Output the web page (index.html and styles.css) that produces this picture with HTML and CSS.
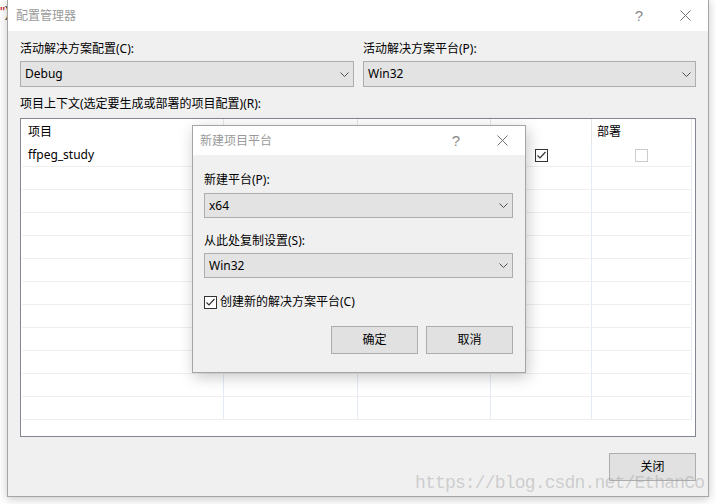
FILE: index.html
```html
<!DOCTYPE html>
<html>
<head>
<meta charset="utf-8">
<link rel="stylesheet" href="styles.css">
</head>
<body>
<div class="desktop">
  <div class="behind"><span class="q">"</span><span class="p">)</span></div>

  <div class="win main">
    <div class="titlebar">
      <span class="title">配置管理器</span>
      <span class="tbtn help">?</span>
      <span class="tbtn"><svg width="11" height="11" viewBox="0 0 11 11"><path d="M0.5 0.5L10.5 10.5M10.5 0.5L0.5 10.5" stroke="#6f6f6f" stroke-width="1" fill="none"/></svg></span>
    </div>
    <div class="body">
      <div class="toprow">
        <div class="field">
          <div class="label">活动解决方案配置(C):</div>
          <div class="combo combo-main"><span>Debug</span><svg width="9" height="5" viewBox="0 0 9 5"><path d="M0.5 0.5L4.5 4.5L8.5 0.5" fill="none" stroke="#505050"/></svg></div>
        </div>
        <div class="field">
          <div class="label">活动解决方案平台(P):</div>
          <div class="combo combo-main"><span>Win32</span><svg width="9" height="5" viewBox="0 0 9 5"><path d="M0.5 0.5L4.5 4.5L8.5 0.5" fill="none" stroke="#505050"/></svg></div>
        </div>
      </div>
      <div class="label ctx">项目上下文(选定要生成或部署的项目配置)(R):</div>
      <div class="grid">
        <div class="grow ghead">
          <div class="cell">项目</div>
          <div class="cell"></div>
          <div class="cell"></div>
          <div class="cell"></div>
          <div class="cell">部署</div>
        </div>
        <div class="grow">
          <div class="cell">ffpeg_study</div>
          <div class="cell"></div>
          <div class="cell"></div>
          <div class="cell center"><span class="cb cb-on"><svg width="11" height="11" viewBox="0 0 11 11"><path d="M1.5 5.5L4 8L9.5 2" fill="none" stroke="#333" stroke-width="1.2"/></svg></span></div>
          <div class="cell center"><span class="cb cb-off"></span></div>
        </div>
        <div class="grow"><div class="cell"></div><div class="cell"></div><div class="cell"></div><div class="cell"></div><div class="cell"></div></div>
        <div class="grow"><div class="cell"></div><div class="cell"></div><div class="cell"></div><div class="cell"></div><div class="cell"></div></div>
        <div class="grow"><div class="cell"></div><div class="cell"></div><div class="cell"></div><div class="cell"></div><div class="cell"></div></div>
        <div class="grow"><div class="cell"></div><div class="cell"></div><div class="cell"></div><div class="cell"></div><div class="cell"></div></div>
        <div class="grow"><div class="cell"></div><div class="cell"></div><div class="cell"></div><div class="cell"></div><div class="cell"></div></div>
        <div class="grow"><div class="cell"></div><div class="cell"></div><div class="cell"></div><div class="cell"></div><div class="cell"></div></div>
        <div class="grow"><div class="cell"></div><div class="cell"></div><div class="cell"></div><div class="cell"></div><div class="cell"></div></div>
        <div class="grow"><div class="cell"></div><div class="cell"></div><div class="cell"></div><div class="cell"></div><div class="cell"></div></div>
        <div class="grow"><div class="cell"></div><div class="cell"></div><div class="cell"></div><div class="cell"></div><div class="cell"></div></div>
        <div class="grow"><div class="cell"></div><div class="cell"></div><div class="cell"></div><div class="cell"></div><div class="cell"></div></div>
        <div class="grow"><div class="cell"></div><div class="cell"></div><div class="cell"></div><div class="cell"></div><div class="cell"></div></div>
      </div>
      <div class="footer"><div class="btn">关闭</div></div>
    </div>
  </div>

  <div class="win dialog">
    <div class="titlebar dtitlebar">
      <span class="title">新建项目平台</span>
      <span class="tbtn help">?</span>
      <span class="tbtn"><svg width="11" height="11" viewBox="0 0 11 11"><path d="M0.5 0.5L10.5 10.5M10.5 0.5L0.5 10.5" stroke="#6f6f6f" stroke-width="1" fill="none"/></svg></span>
    </div>
    <div class="dbody">
      <div class="label l1">新建平台(P):</div>
      <div class="combo combo-d"><span>x64</span><svg width="9" height="5" viewBox="0 0 9 5"><path d="M0.5 0.5L4.5 4.5L8.5 0.5" fill="none" stroke="#505050"/></svg></div>
      <div class="label l2">从此处复制设置(S):</div>
      <div class="combo combo-d"><span>Win32</span><svg width="9" height="5" viewBox="0 0 9 5"><path d="M0.5 0.5L4.5 4.5L8.5 0.5" fill="none" stroke="#505050"/></svg></div>
      <div class="checkrow">
        <span class="cb cb-on"><svg width="11" height="11" viewBox="0 0 11 11"><path d="M1.5 5.5L4 8L9.5 2" fill="none" stroke="#333" stroke-width="1.2"/></svg></span>
        <span>创建新的解决方案平台(C)</span>
      </div>
      <div class="dbuttons">
        <div class="btn">确定</div>
        <div class="btn">取消</div>
      </div>
    </div>
  </div>

  <div class="watermark">https://blog.csdn.net/EthanCo</div>
</div>
</body>
</html>
```

FILE: styles.css
```css
* { box-sizing: border-box; }
html, body {
  margin: 0;
  padding: 0;
  background: #ffffff;
  width: 716px;
  height: 504px;
  overflow: hidden;
}
body {
  font-family: "Noto Sans", "Noto Sans CJK SC", sans-serif;
  font-size: 12px;
  line-height: 16px;
  color: #000;
}
.desktop {
  position: relative;
  width: 716px;
  height: 504px;
  overflow: hidden;
}
.behind {
  position: absolute;
  left: 0;
  top: 4px;
  font-family: "Liberation Sans", sans-serif;
  font-size: 14px;
  line-height: 16px;
  white-space: nowrap;
}
.behind .q { color: #c8102e; }
.behind .p { color: #3a2a1a; }

.win {
  position: absolute;
  background: #f0f0f0;
  border: 1px solid #a5a5a5;
}
.main {
  left: 7px;
  top: -1px;
  width: 702px;
  height: 498px;
  box-shadow: 0 2px 9px rgba(0, 0, 0, 0.22);
}
.titlebar {
  height: 31px;
  background: #fff;
  display: flex;
  align-items: center;
  padding-left: 8px;
}
.titlebar .title {
  color: #9a9a9a;
  flex: 1;
  padding-top: 1px;
}
.tbtn {
  width: 46px;
  height: 100%;
  display: flex;
  align-items: center;
  justify-content: center;
}
.help {
  font-family: "Liberation Sans", sans-serif;
  font-size: 15px;
  color: #8a8a8a;
}
.body {
  padding: 10px 12px 15px 12px;
}
.toprow {
  display: grid;
  grid-template-columns: 334px 333px;
  column-gap: 9px;
}
.label {
  height: 16px;
  white-space: nowrap;
}
.combo {
  background: #e3e3e3;
  border: 1px solid #adadad;
  display: flex;
  align-items: center;
  justify-content: space-between;
  padding: 0 4px 0 4px;
}
.combo-main {
  height: 26px;
  margin-top: 4px;
}
.ctx {
  margin-top: 9px;
}
.grid {
  margin-top: 6px;
  height: 319px;
  background: #fff;
  border: 1px solid #828790;
  padding-left: 1px;
  overflow: hidden;
}
.grow {
  display: grid;
  grid-template-columns: 202px 134px 133px 101px 100px;
  height: 23px;
  width: 670px;
  border-bottom: 1px solid #efefef;
}
.grow .cell {
  border-right: 1px solid #e4ebf6;
  padding-left: 6px;
  display: flex;
  align-items: center;
  white-space: nowrap;
}
.ghead {
  height: 25px;
  border-bottom: none;
}
.ghead .cell {
  border-right-color: #e6e6e6;
}
.ghead .cell:nth-child(5) { padding-left: 5px; }
.grow .cell.center {
  justify-content: center;
  padding-left: 0;
}
.cb {
  width: 13px;
  height: 13px;
  display: inline-flex;
  align-items: center;
  justify-content: center;
  background: #fff;
  flex: none;
}
.cb-on { border: 1px solid #333; }
.cb-off { border: 1px solid #cccccc; }

.footer {
  margin-top: 16px;
  display: flex;
  justify-content: flex-end;
}
.btn {
  width: 87px;
  height: 28px;
  background: #e1e1e1;
  border: 1px solid #adadad;
  display: flex;
  align-items: center;
  justify-content: center;
}

.dialog {
  left: 192px;
  top: 125px;
  width: 334px;
  height: 248px;
  box-shadow: 2px 4px 14px rgba(0, 0, 0, 0.22);
}
.dtitlebar {
  height: 29px;
  padding-left: 7px;
}
.dbody {
  padding: 17px 12px 18px 11px;
}
.combo-d {
  height: 25px;
}
.l1 + .combo-d { margin-top: 5px; }
.l2 { margin-top: 15px; }
.l2 + .combo-d { margin-top: 4px; }
.checkrow {
  margin-top: 16px;
  height: 16px;
  display: flex;
  align-items: center;
  gap: 3px;
}
.dbuttons {
  margin-top: 16px;
  display: flex;
  justify-content: flex-end;
  gap: 8px;
}

.watermark {
  position: absolute;
  left: 415px;
  top: 472px;
  font-family: "Liberation Mono", monospace;
  font-size: 18px;
  letter-spacing: -0.83px;
  line-height: 22px;
  color: rgba(160, 160, 160, 0.45);
  white-space: nowrap;
}
```
